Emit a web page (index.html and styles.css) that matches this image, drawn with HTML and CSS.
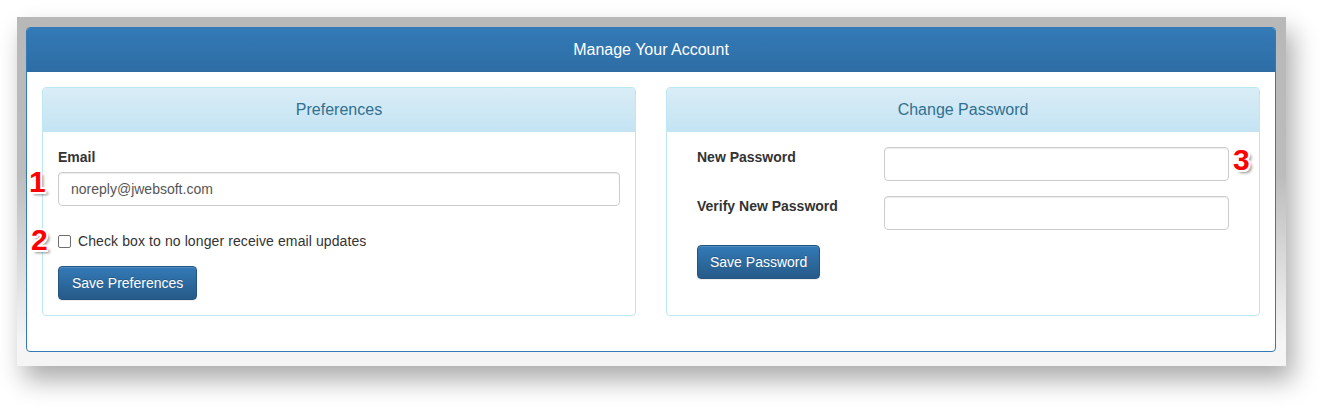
FILE: index.html
```html
<!DOCTYPE html>
<html>
<head>
<meta charset="utf-8">
<link rel="stylesheet" href="styles.css">
</head>
<body>
<div class="frame">
  <div class="panel-main">
    <div class="main-heading">Manage Your Account</div>
    <div class="main-body">
      <div class="subpanel">
        <div class="sub-heading">Preferences</div>
        <div class="sub-body">
          <div class="form-group">
            <label class="field-label">Email</label>
            <input class="input" type="text" value="noreply@jwebsoft.com">
          </div>
          <div class="form-group check-group">
            <label class="check"><span class="box"></span>Check box to no longer receive email updates</label>
          </div>
          <button class="btn btn-wide">Save Preferences</button>
        </div>
      </div>
      <div class="subpanel">
        <div class="sub-heading">Change Password</div>
        <div class="sub-body">
          <div class="pw-form">
            <div class="pw-row">
              <label class="field-label pw-label">New Password</label>
              <input class="input" type="password">
            </div>
            <div class="pw-row">
              <label class="field-label pw-label">Verify New Password</label>
              <input class="input" type="password">
            </div>
            <button class="btn">Save Password</button>
          </div>
        </div>
      </div>
    </div>
  </div>
  <span class="marker m1">1</span>
  <span class="marker m2">2</span>
  <span class="marker m3">3</span>
</div>
</body>
</html>
```

FILE: styles.css
```css
* { box-sizing: border-box; }
html, body { margin: 0; padding: 0; background: #fff; }
body {
  padding: 17px 17px 60px 17px;
  font-family: "Liberation Sans", Arial, sans-serif;
  font-size: 14px;
  line-height: 20px;
  color: #333;
}
.frame {
  position: relative;
  width: 1269px;
  padding: 10px 10px 14px 9px;
  background: linear-gradient(to bottom, #b8b8b8 0%, #bcbcbc 45%, #e4e4e4 78%, #f5f5f5 93%);
  box-shadow: 7px 14px 24px rgba(0,0,0,0.33);
}
.panel-main {
  width: 1250px;
  background: #fff;
  border: 1px solid #337ab7;
  border-radius: 4px;
  overflow: hidden;
}
.main-heading {
  height: 44px;
  line-height: 44px;
  text-align: center;
  color: #fff;
  font-size: 16px;
  background: linear-gradient(to bottom, #337ab7 0%, #2e6da4 100%);
}
.main-body {
  padding: 15px;
  display: grid;
  grid-template-columns: 594px 594px;
  column-gap: 30px;
}
.subpanel {
  border: 1px solid #bce8f1;
  border-radius: 4px;
  margin-bottom: 20px;
  overflow: hidden;
  background: #fff;
}
.sub-heading {
  height: 44px;
  line-height: 44px;
  text-align: center;
  font-size: 16px;
  color: #31708f;
  background: linear-gradient(to bottom, #d9edf7 0%, #c4e3f3 100%);
}
.sub-body {
  padding: 15px;
}
.form-group { margin-bottom: 15px; }
.check-group { padding-top: 10px; }
.field-label {
  display: block;
  font-weight: bold;
  margin-bottom: 5px;
}
.input {
  display: block;
  width: 100%;
  height: 34px;
  padding: 6px 12px;
  font-family: "Liberation Sans", Arial, sans-serif;
  font-size: 14px;
  color: #555;
  background: #fff;
  border: 1px solid #ccc;
  border-radius: 4px;
  box-shadow: inset 0 1px 1px rgba(0,0,0,0.075);
  outline: none;
}
.check {
  display: flex;
  align-items: center;
  height: 20px;
  letter-spacing: 0.1px;
}
.box {
  width: 13px;
  height: 13px;
  border: 1px solid #6f6f6f;
  border-radius: 2px;
  background: #fff;
  margin-right: 7px;
}
.btn {
  display: inline-block;
  height: 34px;
  padding: 6px 12px;
  font-family: "Liberation Sans", Arial, sans-serif;
  font-size: 14px;
  line-height: 20px;
  color: #fff;
  background: linear-gradient(to bottom, #337ab7 0%, #265a88 100%);
  border: 1px solid #245580;
  border-radius: 4px;
  text-shadow: 0 -1px 0 rgba(0,0,0,0.2);
  box-shadow: inset 0 1px 0 rgba(255,255,255,0.15), 0 1px 1px rgba(0,0,0,0.075);
}
.btn-wide { padding: 6px 13px; }
.pw-form {
  padding: 0 15px;
}
.pw-row {
  display: grid;
  grid-template-columns: 172px 1fr;
  column-gap: 15px;
  margin-bottom: 15px;
}
.pw-label {
  margin: 0;
}
.marker {
  position: absolute;
  font-family: "Liberation Sans", Arial, sans-serif;
  font-weight: bold;
  font-size: 30px;
  line-height: 30px;
  color: #f00;
  text-shadow:
    -2px 0 0 #fff, 2px 0 0 #fff, 0 -2px 0 #fff, 0 2px 0 #fff,
    -1.5px -1.5px 0 #fff, 1.5px 1.5px 0 #fff, -1.5px 1.5px 0 #fff, 1.5px -1.5px 0 #fff,
    3px 3px 3px rgba(0,0,0,0.45);
}
.m1 { left: 12px; top: 150px; }
.m2 { left: 14px; top: 208px; }
.m3 { left: 1216px; top: 128px; }
```
